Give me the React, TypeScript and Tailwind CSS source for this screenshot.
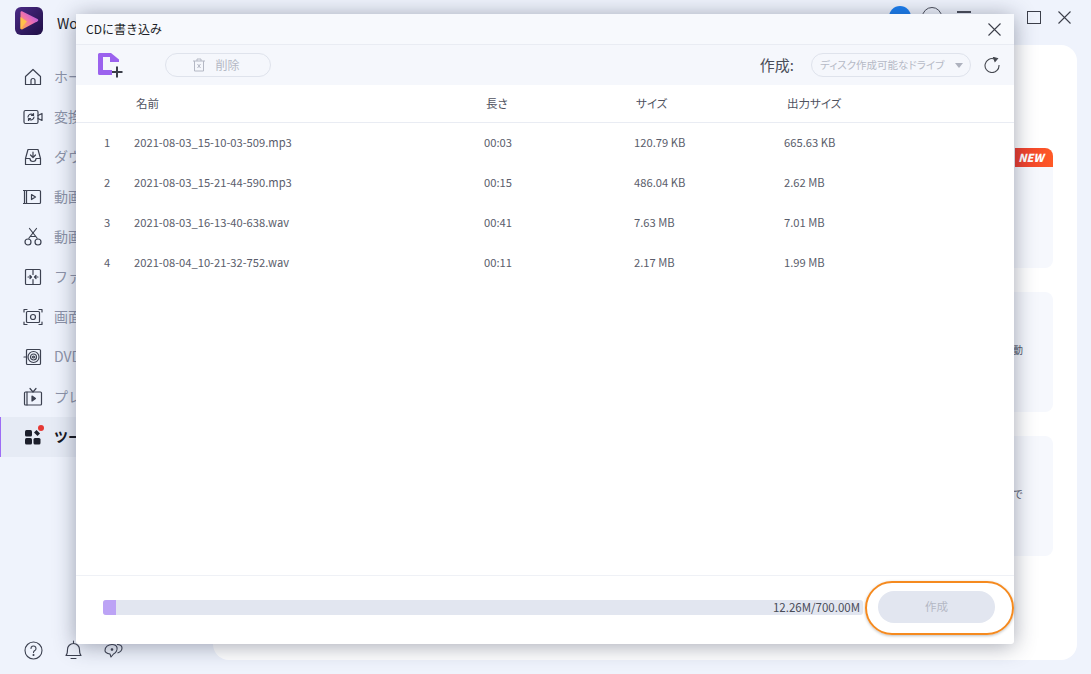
import React from "react";

const FONT = "font-['Noto_Sans_CJK_JP','Noto_Sans',sans-serif]";

const navItems = [
  { label: "ホーム", icon: "home" },
  { label: "変換", icon: "convert" },
  { label: "ダウンロード", icon: "download" },
  { label: "動画圧縮", icon: "video" },
  { label: "動画編集", icon: "cut" },
  { label: "ファイル結合", icon: "merge" },
  { label: "画面録画", icon: "record" },
  { label: "DVD作成", icon: "dvd" },
  { label: "プレーヤー", icon: "tv" },
  { label: "ツールボックス", icon: "tools" },
];

const files = [
  { no: 1, name: "2021-08-03_15-10-03-509.mp3", len: "00:03", size: "120.79 KB", out: "665.63 KB" },
  { no: 2, name: "2021-08-03_15-21-44-590.mp3", len: "00:15", size: "486.04 KB", out: "2.62 MB" },
  { no: 3, name: "2021-08-03_16-13-40-638.wav", len: "00:41", size: "7.63 MB", out: "7.01 MB" },
  { no: 4, name: "2021-08-04_10-21-32-752.wav", len: "00:11", size: "2.17 MB", out: "1.99 MB" },
];

function NavIcon({ name }: { name: string }) {
  const p = { fill: "none", stroke: "#3c4150", strokeWidth: 1.2, strokeLinejoin: "round" as const, strokeLinecap: "round" as const };
  return (
    <svg width="20" height="20" viewBox="0 0 20 20" {...p} className="shrink-0">
      {name === "home" && <path d="M2.500 9.500 10 2.500l7.500 7v8h-15zM8 17.500v-4a2 2 0 0 1 4 0v4" />}
      {name === "convert" && (
        <>
          <rect x="1" y="3.500" width="14" height="13" rx="1.500" />
          <path d="M15 8.500l4-2v7l-4-2M5 10a3 3 0 0 1 5.300-1.800M11 10a3 3 0 0 1-5.300 1.800M10.500 6.500v2h-2M5.500 13.500v-2h2" />
        </>
      )}
      {name === "download" && <path d="M5 2.500h10l2.500 9v6h-15v-6zM2.500 11.500H7a3 3 0 0 0 6 0h4.500M10 5v5M7.500 8l2.500 2.500L12.500 8" />}
      {name === "video" && (
        <>
          <rect x="3.500" y="3.500" width="14" height="13" rx="1" />
          <path d="M.5 3.500h3M.5 16.500h3M1.500 3.500v13M8.500 7.500l4 2.500-4 2.500z" />
        </>
      )}
      {name === "cut" && <path d="M6 11 13.500 1.500M14 11 6.500 1.500M8 9.500h4M8 15a3 3 0 1 1-6 0 3 3 0 0 1 6 0zM18 15a3 3 0 1 1-6 0 3 3 0 0 1 6 0z" />}
      {name === "merge" && (
        <>
          <rect x="2.500" y="2.500" width="15" height="15" rx="1" />
          <path d="M10 2.500v5M10 12.500v5M5 10h3.500M7 8.500 8.500 10 7 11.500M15 10h-3.500M13 8.500 11.500 10l1.500 1.500" />
        </>
      )}
      {name === "record" && (
        <>
          <path d="M1 5V2.500h3M16 2.500h3V5M19 15v2.500h-3M4 17.500H1V15" />
          <rect x="3.500" y="4.500" width="13" height="11" rx="1" />
          <circle cx="10" cy="10" r="2.500" />
        </>
      )}
      {name === "dvd" && (
        <>
          <rect x="3.500" y="2.500" width="14" height="15" rx="1" />
          <path d="M1 10h2.500" />
          <circle cx="10.500" cy="10" r="5.500" />
          <circle cx="10.500" cy="10" r="3" />
          <circle cx="10.500" cy="10" r="1" />
        </>
      )}
      {name === "tv" && (
        <>
          <rect x="1.500" y="5" width="17" height="13" rx="1" />
          <path d="M4 5v13M7 1.500 10 5l3-3.500" />
          <path d="M9 9l3.500 2.500L9 14z" fill="#3c4150" />
        </>
      )}
      {name === "tools" && (
        <g fill="#1c1f2b" stroke="none">
          <rect x="2" y="3" width="7" height="6.500" rx="1.500" />
          <rect x="2" y="11" width="7" height="6.500" rx="1.500" />
          <rect x="10.500" y="11" width="7" height="6.500" rx="1.500" />
          <path d="M11 5.500 13.500 3l3.500 3.500-2.500 2.500z" />
        </g>
      )}
    </svg>
  );
}

function Sidebar() {
  return (
    <div className="flex w-[213px] shrink-0 flex-col">
      <div className="flex flex-col pt-[12px]">
        {navItems.map((item) => {
          const active = item.icon === "tools";
          return (
            <div
              key={item.label}
              className={`relative flex h-10 items-center gap-[11px] text-[14px] ${
                active ? "border-l border-[#9d6cf5] bg-[#e6ebf5] pl-[22px] font-bold text-[#14161f]" : "pl-[23px] text-[#8d93a8]"
              }`}
            >
              <NavIcon name={item.icon} />
              <span className="whitespace-nowrap pb-[2px]">{item.label}</span>
              {active && <span className="absolute left-[37px] top-[8px] h-[6px] w-[6px] rounded-full bg-[#e53935]" />}
            </div>
          );
        })}
      </div>
      <div className="mt-auto flex items-center gap-[21px] pl-[24px]">
        <svg width="19" height="19" viewBox="0 0 19 19" fill="none" stroke="#3c4150" strokeWidth="1.100">
          <circle cx="9.500" cy="9.500" r="8.500" />
          <path d="M7 7.500a2.500 2.500 0 1 1 3.800 2.100c-.9.500-1.300 1-1.300 2" strokeLinecap="round" />
          <circle cx="9.500" cy="14" r=".5" fill="#3c4150" />
        </svg>
        <svg width="19" height="20" viewBox="0 0 19 20" fill="none" stroke="#3c4150" strokeWidth="1.100">
          <path d="M2 15.500c1.500-1.500 1.500-3 1.500-6a6 6 0 0 1 12 0c0 3 0 4.500 1.500 6zM9.500 1v2.500M7 18.500h5" strokeLinecap="round" strokeLinejoin="round" />
        </svg>
        <svg width="19" height="19" viewBox="0 0 19 19" fill="none" stroke="#3c4150" strokeWidth="1.100">
          <path d="M1 9.500C1 6 4 3.500 8 3.500c2.500 0 4.500 1 5 3 .6 2.500-1 5.500-3.500 6.500L7 16l-1-3C3 12.500 1 11.500 1 9.500zM13 3.500c3 0 5 1.500 5 3.500s-1.500 4-4.500 5" strokeLinejoin="round" />
          <circle cx="8" cy="8.500" r=".8" fill="#3c4150" />
        </svg>
      </div>
    </div>
  );
}

function ToolCard({ text, badge }: { text?: string; badge?: boolean }) {
  return (
    <div className="relative flex h-[120px] items-center justify-end rounded-lg bg-[#f6f8fd] pb-[6px] pr-[30px] text-[10px] text-[#555a6b]">
      {text}
      {badge && (
        <span className="absolute right-0 top-0 flex h-[19px] w-[38px] items-center justify-center rounded-tr-lg bg-gradient-to-r from-[#ec3a2d] to-[#ff5a26] pr-[6px] text-[11px] font-black italic text-white">
          NEW
        </span>
      )}
    </div>
  );
}

function BurnDialog() {
  const cols = "grid grid-cols-[58px_350px_150px_150px_1fr] items-center";
  return (
    <div className="absolute left-[76px] top-[14px] flex h-[630px] w-[938px] flex-col rounded-[3px] bg-white shadow-[0_2px_22px_rgba(35,42,70,0.42)]">
      <div className="flex h-[31px] shrink-0 items-center justify-between border-b border-[#e9ecf3] bg-[#f7f9fd] pl-[10px] pr-[13px] text-[12px] text-[#1d1f28]">
        <span>CDに書き込み</span>
        <svg width="13" height="13" viewBox="0 0 13 13" stroke="#3c3f4a" strokeWidth="1.100">
          <path d="M.5.5l12 12M12.500.5l-12 12" />
        </svg>
      </div>

      <div className="flex h-10 shrink-0 items-center bg-[#f5f7fc] pl-[22px] pr-[14px]">
        <svg width="25" height="25" viewBox="0 0 25 25">
          <path d="M0 1.500A1.500 1.500 0 0 1 1.500 0H13l8 6.500V13h-7v9H1.500A1.500 1.500 0 0 1 0 20.500z" fill="#9b62ee" />
          <path d="M5 4v13h9v-4h7V9h-9V4z" fill="#f5f7fc" />
          <path d="M12 4.500v3h4z" fill="#9b62ee" />
          <path d="M19 13.500v11M14 19h10.500" stroke="#3b3e48" strokeWidth="2" />
        </svg>
        <div className="ml-[42px] flex h-6 w-[106px] items-center justify-center gap-[9px] rounded-full border border-[#dfe3ec] pr-[4px] text-[12px] text-[#b4b8c4]">
          <svg width="14" height="14" viewBox="0 0 14 14" fill="none" stroke="#b4b8c4">
            <path d="M1 3h12M5 3V1h4v2M2.500 3v10h9V3M5.500 6l3 4M8.500 6l-3 4" />
          </svg>
          <span>削除</span>
        </div>
        <span className="ml-auto text-[15px] text-[#4a4d59] [font-feature-settings:'palt']">作成:</span>
        <div className="ml-[17px] flex h-6 w-[160px] items-center justify-between rounded-full border border-[#dfe3ec] pl-[8px] pr-[7px] text-[10.5px] text-[#b6bac6] [font-feature-settings:'palt']">
          <span className="whitespace-nowrap">ディスク作成可能なドライブ</span>
          <span className="h-0 w-0 border-x-[4px] border-t-[5px] border-x-transparent border-t-[#aeb2be]" />
        </div>
        <svg className="ml-[13px]" width="16" height="16" viewBox="0 0 16 16" fill="none" stroke="#44474f" strokeWidth="1.100">
          <path d="M10.500 2A7 7 0 1 0 15 8" />
          <path d="M9.500 .5 13.500 1.500 11 4.500z" fill="#44474f" />
        </svg>
      </div>

      <div className={`${cols} h-[38px] shrink-0 border-b border-[#e9ecf3] text-[11.5px] text-[#50535f] [font-feature-settings:'palt']`}>
        <span />
        <span className="pl-[2px]">名前</span>
        <span className="pl-[2px]">長さ</span>
        <span className="pl-[2px]">サイズ</span>
        <span className="pl-[3px]">出力サイズ</span>
      </div>

      <div className="flex-1">
        {files.map((f) => (
          <div key={f.no} className={`${cols} h-10 pb-[2px] text-[11.2px] text-[#5a5d6b]`}>
            <span className="pl-[28px]">{f.no}</span>
            <span>{f.name}</span>
            <span>{f.len}</span>
            <span>{f.size}</span>
            <span>{f.out}</span>
          </div>
        ))}
      </div>

      <div className="flex h-[69px] shrink-0 items-start border-t border-[#eff1f6] pl-[27px]">
        <div className="mt-[24px] flex h-[15px] w-[760px] items-center justify-end rounded-[3px] bg-[#e2e6f0] pr-[3px] text-[11.5px] text-[#4a4d59]">
          12.26M/700.00M
        </div>
        <div className="ml-[15px] mt-[15px] flex h-8 w-[117px] items-center justify-center rounded-full bg-[#e2e6f0] text-[11.5px] text-[#b4b8c4]">
          作成
        </div>
      </div>
      <span className="absolute bottom-[29px] left-[27px] h-[15px] w-[13px] rounded-l-[3px] bg-[#bca3f5]" />
      <span className="absolute left-[789px] top-[567px] h-[54px] w-[149px] rounded-full border-2 border-[#f58a1f] shadow-[0_1px_3px_rgba(0,0,0,0.25)]" />
    </div>
  );
}

export default function App() {
  return (
    <div className={`relative flex h-[674px] w-[1091px] flex-col overflow-hidden bg-[#eff3fc] ${FONT}`}>
      <div className="flex h-[45px] shrink-0 items-center pl-[15px] pr-[20px]">
        <svg width="28" height="28" viewBox="0 0 28 28" className="-mt-[3px] shrink-0">
          <defs>
            <linearGradient id="logoBg" x1="0" y1="0" x2="1" y2="1">
              <stop offset="0" stopColor="#4a2a86" />
              <stop offset="1" stopColor="#1f0f45" />
            </linearGradient>
            <linearGradient id="logoPlay" x1="0" y1="1" x2="1" y2="0">
              <stop offset="0" stopColor="#ffb13d" />
              <stop offset="0.5" stopColor="#ef6fb0" />
              <stop offset="1" stopColor="#8f53f5" />
            </linearGradient>
          </defs>
          <rect width="28" height="28" rx="6" fill="url(#logoBg)" />
          <path d="M5.500 5.500c0-1 1-1.500 2-1l15 7.500c1 .6 1 1.700 0 2.300l-15 8c-1 .5-2-.1-2-1z" fill="url(#logoPlay)" />
          <path d="M5.500 10l6.500 4.500-6.500 7.500z" fill="#ffc04a" />
        </svg>
        <span className="ml-[14px] mt-[1px] whitespace-nowrap text-[14px] text-[#1a1c26]">Wondershare UniConverter</span>
        <div className="ml-auto -mt-[11px] flex items-center">
          <span className="h-[22px] w-[22px] rounded-full bg-[#1a7ef0]" />
          <span className="ml-[11px] h-[20px] w-[20px] rounded-full border border-[#4a4d59]" />
          <span className="ml-[15px] -mt-[10px] h-[2px] w-[14px] bg-[#4a4d59]" />
          <span className="ml-[56px] h-[13px] w-[14px] border border-[#3c3f4a]" />
          <svg className="ml-[17px]" width="13" height="13" viewBox="0 0 13 13" stroke="#3c3f4a" strokeWidth="1.100">
            <path d="M.5.5l12 12M12.500.5l-12 12" />
          </svg>
        </div>
      </div>

      <div className="flex min-h-0 flex-1 pb-[14px] pr-[14px]">
        <Sidebar />
        <div className="flex flex-1 flex-col gap-6 rounded-2xl bg-white pl-[24px] pr-[24px] pt-[103px]">
          <ToolCard badge />
          <ToolCard text="動" />
          <ToolCard text="で" />
        </div>
      </div>

      <BurnDialog />
    </div>
  );
}
